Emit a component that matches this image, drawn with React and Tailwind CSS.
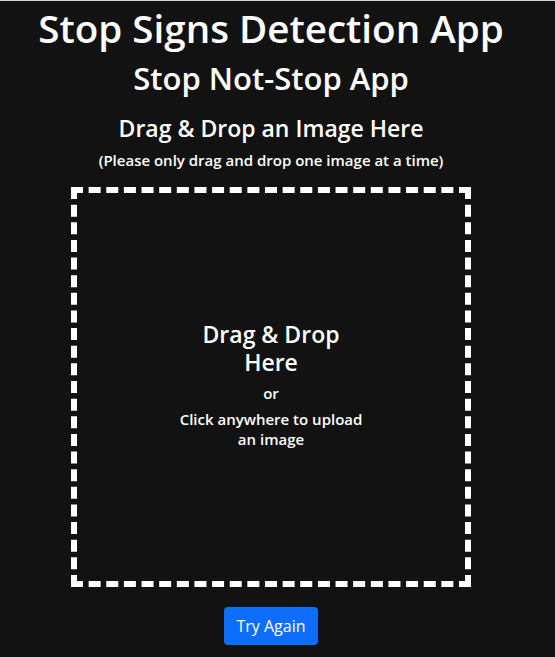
import React from 'react';

const App = () => {
    return (
        <div className="min-h-[657px] bg-[#121212] text-white border-t border-[#d4d4d4] pr-[13px] flex flex-col items-center" style={{ fontFamily: '"Open Sans", "Noto Sans", sans-serif' }}>
            <h1 className="text-[38.6px] leading-[48px] font-semibold mt-[3px]">Stop Signs Detection App</h1>
            <h2 className="text-[31px] leading-[38px] font-semibold mt-[7px]">Stop Not-Stop App</h2>
            <h3 className="text-[23px] leading-[29px] font-semibold mt-[17px]">Drag &amp; Drop an Image Here</h3>
            <p className="text-[15px] leading-[20px] font-semibold mt-[7px]">(Please only drag and drop one image at a time)</p>

            <div className="mt-[17px] w-[400px] h-[400px] border-[6px] border-dashed border-white flex items-center justify-center cursor-pointer">
                <div className="w-[188px] text-center mb-[5px]">
                    <p className="text-[23px] leading-[28px] font-semibold">Drag &amp; Drop Here</p>
                    <p className="text-[15px] leading-[20px] font-semibold mt-[7px]">or</p>
                    <p className="text-[15px] leading-[20px] font-semibold mt-[6px]">Click anywhere to upload an image</p>
                </div>
            </div>

            <button className="mt-[20px] h-[38px] px-3 rounded-[4px] bg-[#0d6efd] text-white text-[16px]">
                Try Again
            </button>
        </div>
    );
};

export default App;
